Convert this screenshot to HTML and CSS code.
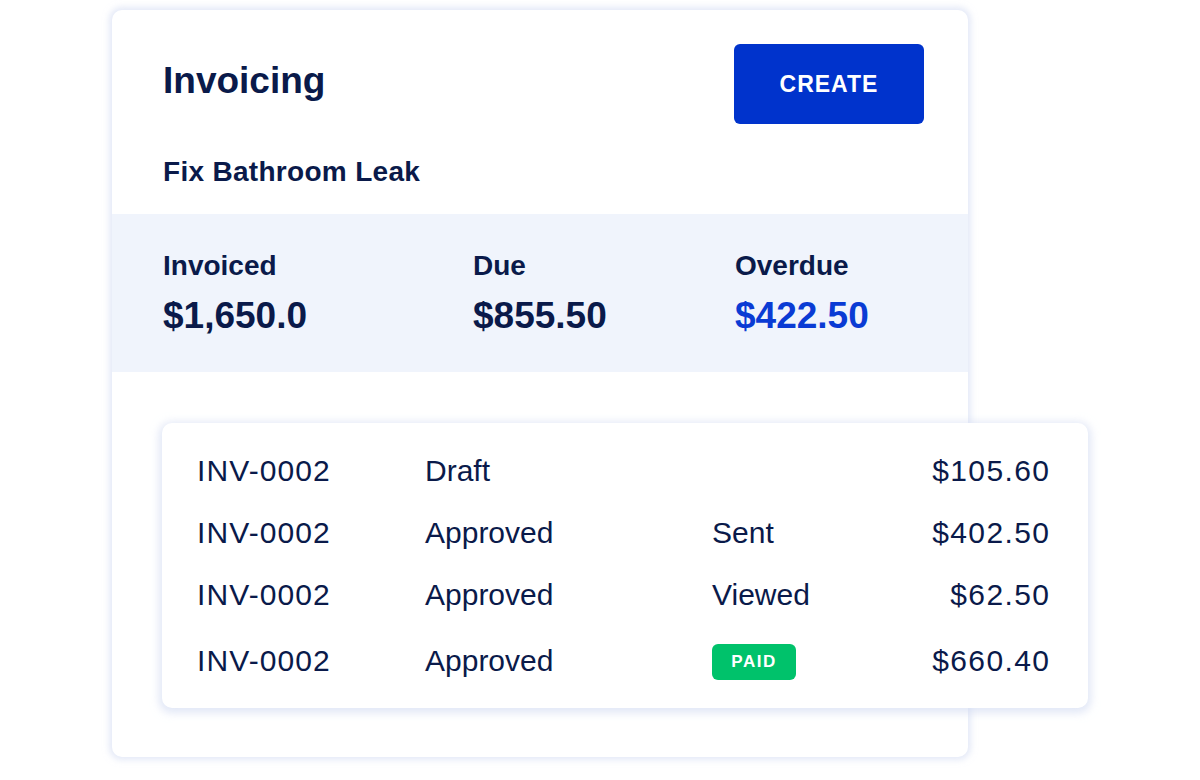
FILE: index.html
```html
<!DOCTYPE html>
<html>
<head>
<meta charset="utf-8">
<link rel="stylesheet" href="styles.css">
</head>
<body>
<div class="card">
  <div class="head">
    <h1 class="title">Invoicing</h1>
    <button class="create">CREATE</button>
  </div>
  <div class="job">Fix Bathroom Leak</div>
  <div class="stats">
    <div class="stat">
      <div class="label">Invoiced</div>
      <div class="value">$1,650.0</div>
    </div>
    <div class="stat">
      <div class="label">Due</div>
      <div class="value">$855.50</div>
    </div>
    <div class="stat">
      <div class="label">Overdue</div>
      <div class="value overdue">$422.50</div>
    </div>
  </div>
  <div class="list">
    <div class="row">
      <span class="num">INV-0002</span><span>Draft</span><span></span><span class="num amt">$105.60</span>
    </div>
    <div class="row">
      <span class="num">INV-0002</span><span>Approved</span><span>Sent</span><span class="num amt">$402.50</span>
    </div>
    <div class="row">
      <span class="num">INV-0002</span><span>Approved</span><span>Viewed</span><span class="num amt">$62.50</span>
    </div>
    <div class="row last">
      <span class="num">INV-0002</span><span>Approved</span><span><span class="badge">PAID</span></span><span class="num amt">$660.40</span>
    </div>
  </div>
</div>
</body>
</html>
```
FILE: styles.css
```css
html, body {
  margin: 0;
  padding: 0;
  background: #ffffff;
}
body {
  font-family: "Liberation Sans", Arial, sans-serif;
  color: #0a1a4a;
  width: 1200px;
  height: 780px;
  overflow: hidden;
}
.card {
  margin: 10px 0 0 112px;
  width: 856px;
  background: #ffffff;
  border-radius: 10px;
  box-shadow: 0 0 6px 3px rgba(205, 215, 240, 0.55);
  padding-bottom: 49px;
}
.head {
  display: flex;
  justify-content: space-between;
  align-items: center;
  padding: 34px 44px 0 51px;
}
.title {
  margin: 0;
  font-size: 37px;
  font-weight: 700;
  line-height: 44px;
  margin-top: -6px;
}
.create {
  width: 190px;
  height: 80px;
  border: none;
  border-radius: 6px;
  background: #0033cc;
  color: #ffffff;
  font-family: "Liberation Sans", Arial, sans-serif;
  font-weight: 700;
  font-size: 23px;
  letter-spacing: 1px;
  padding: 0;
}
.job {
  margin: 31px 0 25px 51px;
  font-size: 28px;
  font-weight: 700;
  letter-spacing: 0.3px;
  line-height: 34px;
}
.stats {
  display: grid;
  grid-template-columns: 310px 262px auto;
  padding: 35px 0 36px 51px;
  background: #f0f4fc;
}
.label {
  font-size: 28px;
  line-height: 34px;
  font-weight: 700;
  margin-bottom: 13px;
}
.value {
  font-size: 37px;
  line-height: 40px;
  font-weight: 700;
}
.overdue {
  color: #0a3bd4;
}
.list {
  margin: 51px 0 0 50px;
  width: 926px;
  box-sizing: border-box;
  padding: 17px 39px 16px 35px;
  background: #ffffff;
  border-radius: 10px;
  box-shadow: 0 2px 8px 3px rgba(205, 215, 240, 0.6);
}
.row {
  display: grid;
  grid-template-columns: 228px 287px 1fr auto;
  align-items: center;
  height: 62px;
  font-size: 30px;
}
.row.last {
  margin-top: 4px;
}
.num {
  letter-spacing: 1.1px;
}
.amt {
  text-align: right;
  letter-spacing: 1.4px;
  margin-right: -1.4px;
}
.badge {
  display: inline-flex;
  align-items: center;
  justify-content: center;
  width: 84px;
  height: 36px;
  border-radius: 6px;
  background: #00c26b;
  color: #ffffff;
  font-size: 17px;
  font-weight: 700;
  letter-spacing: 1.5px;
  vertical-align: middle;
}
```
